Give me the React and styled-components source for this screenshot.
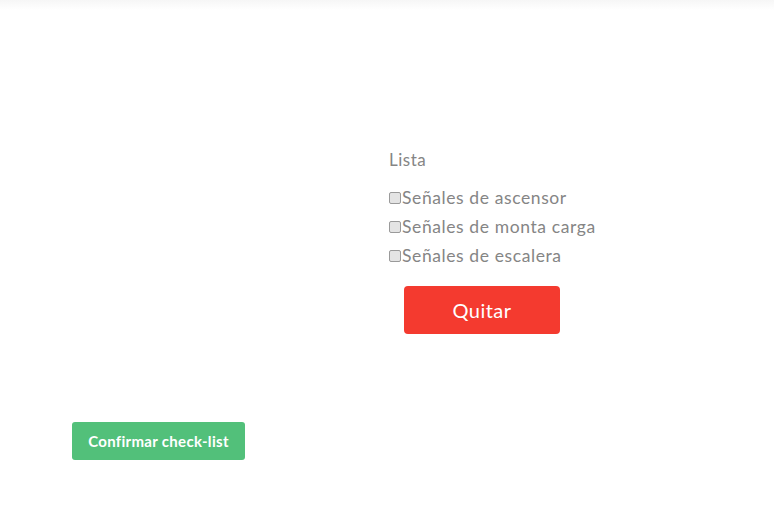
import React from "react";
import styled, { createGlobalStyle } from "styled-components";

const items = ["Señales de ascensor", "Señales de monta carga", "Señales de escalera"];

const App = () => {
    return (
    <>
        <GlobalStyle />
        <TopBar />
        <Page>
            <Columns>
                <div />
                <ListBox>
                    <ListTitle>Lista</ListTitle>
                    {items.map((item) => (
                        <CheckRow key={item}>
                            <CheckBox type="checkbox" />
                            {item}
                        </CheckRow>
                    ))}
                    <RemoveButton>Quitar</RemoveButton>
                </ListBox>
            </Columns>
            <ConfirmButton>Confirmar check-list</ConfirmButton>
        </Page>
    </>
    );
};

const GlobalStyle = createGlobalStyle`
    body {
        margin: 0;
        background: #ffffff;
        font-family: "Lato", "Noto Sans", sans-serif;
    }
`;

const TopBar = styled.div`
    height: 10px;
    background: linear-gradient(#f6f6f6, #ffffff);
`;

const Page = styled.div`
    padding: 0 0 0 72px;
`;

const Columns = styled.div`
    display: grid;
    grid-template-columns: 317px 1fr;
    padding-top: 139px;
`;

const ListBox = styled.div`
    display: flex;
    flex-direction: column;
    align-items: flex-start;
    color: #858585;
`;

const ListTitle = styled.div`
    font-size: 17px;
    line-height: 22px;
    letter-spacing: 0.5px;
    margin-bottom: 12px;
`;

const CheckRow = styled.label`
    display: flex;
    align-items: center;
    font-size: 17.5px;
    letter-spacing: 0.6px;
    line-height: 29px;
    height: 29px;
`;

const CheckBox = styled.input`
    appearance: none;
    width: 12px;
    height: 12px;
    margin: 0 1px 0 0;
    border: 1px solid #9a9a9a;
    border-radius: 2px;
    background: #e4e4e4;
`;

const RemoveButton = styled.button`
    margin: 16px 0 0 15px;
    width: 156px;
    height: 48px;
    border: none;
    border-radius: 4px;
    background: #f43a2f;
    color: #ffffff;
    font-family: "Lato", "Noto Sans", sans-serif;
    font-size: 20px;
    letter-spacing: 0.5px;
`;

const ConfirmButton = styled.button`
    margin-top: 88px;
    width: 173px;
    height: 38px;
    border: none;
    border-radius: 3px;
    background: #52c07a;
    color: #ffffff;
    font-family: "Lato", "Noto Sans", sans-serif;
    font-size: 15px;
    font-weight: 700;
    letter-spacing: 0.3px;
`;

export default App;
